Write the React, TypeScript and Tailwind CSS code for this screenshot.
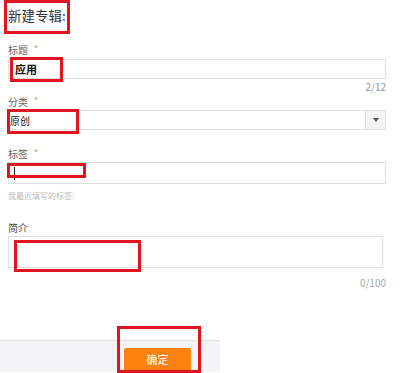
import React from "react";

const FONT = { fontFamily: '"Noto Sans CJK SC", "Noto Sans", sans-serif' };

function RedBox({ className }: { className: string }) {
  return <div className={`absolute border-[3px] border-[#e2141f] pointer-events-none ${className}`} />;
}

function Label({ text, required, className = "" }: { text: string; required?: boolean; className?: string }) {
  return (
    <div className={`flex items-center h-[16px] text-[10px] text-[#666] ${className}`}>
      <span>{text}</span>
      {required && <span className="ml-[6px] text-[9px] text-[#f0905a]">*</span>}
    </div>
  );
}

export default function App() {
  return (
    <div className="relative w-[400px] h-[373px] bg-white overflow-hidden" style={FONT}>
      <div className="flex flex-col pl-[8px] pr-[14px]">
        <div className="pt-[3px] text-[13.5px] leading-[24px] text-[#333]">新建专辑:</div>

        <Label text="标题" required className="mt-[14px]" />
        <div className="mt-[2px] h-[20px] border border-[#dedede] flex items-center pl-[6px] text-[11px] font-bold text-[#111]">
          应用
        </div>
        <div className="h-[12px] leading-[12px] text-right text-[10px] text-[#999] mt-[2px]">2/12</div>

        <Label text="分类" required />
        <div className="mt-[1px] h-[20px] border border-[#dedede] flex items-center">
          <span className="flex-1 pl-[1px] text-[10px] text-[#111]">原创</span>
          <div className="w-[20px] h-full bg-[#f3f3f3] border-l border-[#dedede] flex items-center justify-center">
            <div className="w-0 h-0 border-l-[3px] border-r-[3px] border-t-[4px] border-l-transparent border-r-transparent border-t-[#555]" />
          </div>
        </div>

        <Label text="标签" required className="mt-[15px]" />
        <div className="mt-[1px] h-[22px] border border-[#dedede] flex items-center pl-[5px]">
          <span className="block w-px h-[13px] bg-[#222]" />
        </div>
        <div className="mt-[4px] text-[8px] leading-[16px] text-[#bbb]">我最近填写的标签:</div>

        <div className="mt-[16px] text-[10px] leading-[16px] text-[#444]">简介</div>
        <div className="h-[32px] border border-[#dedede] mr-[3px]" />
        <div className="mt-[9px] h-[12px] leading-[12px] text-right text-[10px] text-[#aaa]">0/100</div>
      </div>

      <div className="mt-[51px] w-[220px] h-[32px] bg-[#f4f3f5] border-t border-[#e4e2e6] pt-[4px] pl-[124px]">
        <button className="w-[67px] h-[23px] bg-[#ff8210] rounded-[2px] text-white text-[11px]">确定</button>
      </div>

      <RedBox className="left-[4px] top-[0px] w-[66px] h-[34px]" />
      <RedBox className="left-[10px] top-[57px] w-[53px] h-[25px]" />
      <RedBox className="left-[7px] top-[109px] w-[72px] h-[25px]" />
      <RedBox className="left-[7px] top-[163px] w-[79px] h-[15px]" />
      <RedBox className="left-[14px] top-[240px] w-[127px] h-[32px]" />
      <RedBox className="left-[117px] top-[326px] w-[84px] h-[47px]" />
    </div>
  );
}
